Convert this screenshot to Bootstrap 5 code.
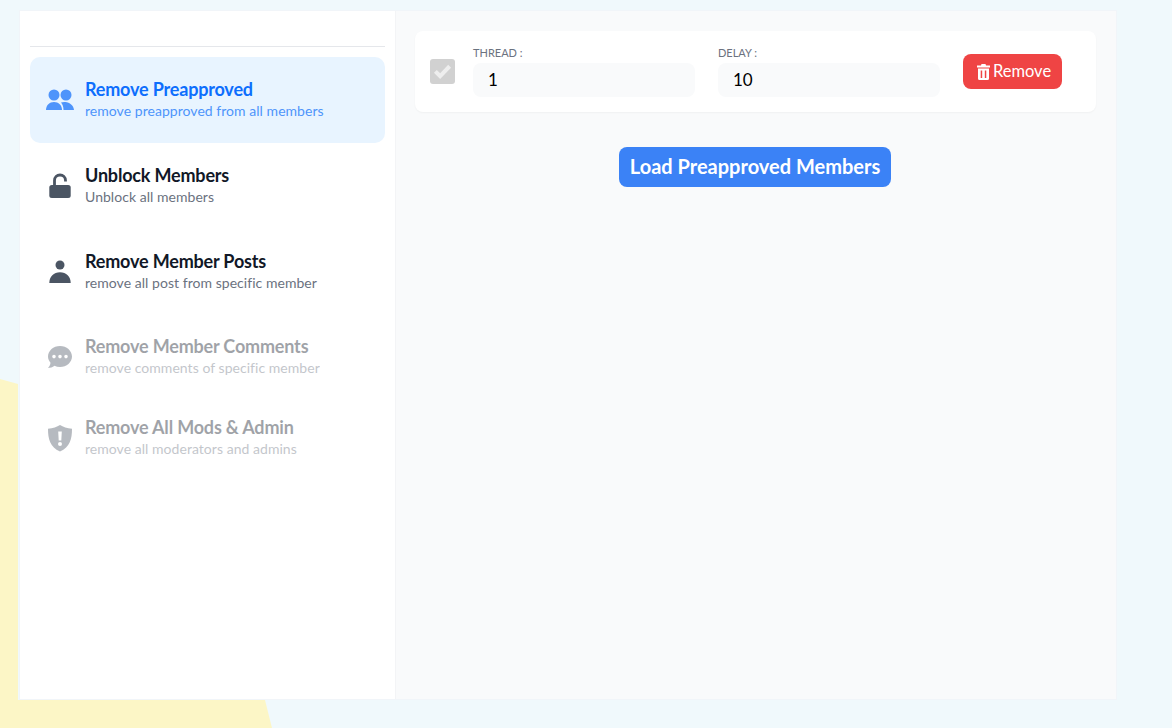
<!DOCTYPE html>
<html lang="en">
<head>
  <meta charset="UTF-8" />
  <meta name="viewport" content="width=device-width, initial-scale=1" />
  <title>Group Tools</title>
  <link href="https://cdn.jsdelivr.net/npm/bootstrap@5.3.3/dist/css/bootstrap.min.css" rel="stylesheet" />
  <style>
    html, body { height: 100%; overflow: hidden; }
    body {
      background: #f0f9fc;
      font-family: Lato, "Open Sans", sans-serif;
      padding: 10px 55px 28px 19px;
    }
    .blob { position: absolute; left: 0; top: 0; width: 1172px; height: 728px; }
    .shell {
      position: relative;
      height: 690px;
      border: 1px solid #f1f5f9;
      background: #f9fafb;
    }
    .side { width: 376px; padding: 35px 10px 0; background: #fff; border-right: 1px solid #f3f4f6; }
    .side-rule { height: 1px; background: #e5e7eb; margin-bottom: 10px; }
    .tool { height: 86px; padding: 20px 15px 0; border-radius: 10px; gap: 10px; color: #111827; }
    .tool svg { width: 30px; height: 30px; flex: none; margin-top: 8px; fill: #4b5563; }
    .tool-name { font-size: 18px; line-height: 24px; font-weight: 700; letter-spacing: -.18px; }
    .tool-desc { font-size: 14px; line-height: 20px; color: #6b7280; letter-spacing: .04px; }
    .tool.on { background: #e8f4ff; }
    .tool.on .tool-name { color: #0d6efd; }
    .tool.on .tool-desc { color: #4e94fb; }
    .tool.on svg { fill: #4e94fb; }
    .tool.off { height: 81px; padding-top: 19px; opacity: .4; }
    .work { padding: 20px 20px 0 19px; }
    .thread-box { height: 81px; padding-left: 15px; background: #fff; border-radius: 8px; box-shadow: 0 1px 2px rgba(0, 0, 0, .04); }
    .tick { width: 25px; height: 25px; margin-right: 18px; background: #d1d1d1; border-radius: 3px; }
    .tick svg { width: 19px; height: 19px; fill: #eee; }
    .field { width: 222px; margin-right: 23px; margin-bottom: 1px; }
    .field label { display: block; font-size: 11px; line-height: 14px; color: #6b7280; margin-bottom: 3px; }
    .field .form-control {
      height: 34px; padding: 0 15px; border: 0; border-radius: 8px; background: #f9fafb;
      font-family: Lato, sans-serif; font-size: 17px; color: #000;
    }
    .btn-drop {
      --bs-btn-bg: #ef4444; --bs-btn-hover-bg: #dc2626; --bs-btn-color: #fff; --bs-btn-hover-color: #fff;
      --bs-btn-border-width: 0;
      width: 99px; height: 35px; padding: 0 0 1px 3px; border-radius: 8px; font-size: 16.500px; gap: 3px;
    }
    .btn-drop svg { width: 13px; height: 16px; flex: none; fill: #fff; margin-top: 1px; }
    .btn-load {
      --bs-btn-bg: #3b82f6; --bs-btn-hover-bg: #2563eb; --bs-btn-color: #fff; --bs-btn-hover-color: #fff;
      --bs-btn-border-width: 0;
      width: 272px; height: 40px; padding: 0 0 2px; margin: 35px 1px 0 0; border-radius: 8px; font-size: 20px; font-weight: 700;
    }
  </style>
</head>
<body>
  <svg class="blob" viewBox="0 0 1172 728"><path d="M0 379 L18 384 L18 700 L265 700 L272 728 L0 728 Z" fill="#fcf6c6"/></svg>

  <div class="shell d-flex">
    <div class="side">
      <div class="side-rule"></div>

      <div class="tool on d-flex">
        <svg viewBox="0 0 30 30"><circle cx="9" cy="10" r="5.5"/><circle cx="21" cy="10" r="5.5"/><path d="M1 25c0-5 3.500-8 8-8s8 3 8 8z"/><path d="M18.500 25c0-3.200-.9-5.700-2.500-7.500 1.300-.4 3-.6 4.300-.4 4.500.3 8.200 3.400 8.700 7.900z"/></svg>
        <div><div class="tool-name">Remove Preapproved</div><div class="tool-desc">remove preapproved from all members</div></div>
      </div>

      <div class="tool d-flex">
        <svg viewBox="0 0 30 30"><path d="M9.500 15V9.500a5.500 5.500 0 0 1 11 0v1" fill="none" stroke="#4b5563" stroke-width="2.800"/><rect x="4.300" y="14" width="21.400" height="13" rx="2.500"/></svg>
        <div><div class="tool-name">Unblock Members</div><div class="tool-desc">Unblock all members</div></div>
      </div>

      <div class="tool d-flex">
        <svg viewBox="0 0 30 30"><circle cx="15" cy="8" r="4.500"/><path d="M4.300 26c0-6.500 4.500-10.700 10.700-10.700S25.700 19.500 25.700 26z"/></svg>
        <div><div class="tool-name">Remove Member Posts</div><div class="tool-desc">remove all post from specific member</div></div>
      </div>

      <div class="tool off d-flex">
        <svg viewBox="0 0 30 30"><path fill-rule="evenodd" d="M15 4c6.600 0 12 4.700 12 10.500S21.600 25 15 25c-2 0-3.900-.4-5.500-1.200C7.500 25.500 5.300 26 3 26c1.500-1.500 2.300-3.500 2.500-5.300C4 19 3 16.900 3 14.500 3 8.700 8.400 4 15 4zM9 12.800a1.800 1.800 0 1 0 0 3.600 1.800 1.800 0 0 0 0-3.600zm6 0a1.800 1.800 0 1 0 0 3.600 1.800 1.800 0 0 0 0-3.600zm6 0a1.800 1.800 0 1 0 0 3.600 1.800 1.800 0 0 0 0-3.600z"/></svg>
        <div><div class="tool-name">Remove Member Comments</div><div class="tool-desc">remove comments of specific member</div></div>
      </div>

      <div class="tool off d-flex">
        <svg viewBox="0 0 30 30"><path fill-rule="evenodd" d="M15 2c3 2 7 3.300 12 3.800 0 10-2 18.500-12 22.700C5 24.300 3 15.800 3 5.800 8 5.300 12 4 15 2zm-1.800 6.500.5 9h2.600l.5-9zM15 19a2 2 0 1 0 0 4 2 2 0 0 0 0-4z"/></svg>
        <div><div class="tool-name">Remove All Mods &amp; Admin</div><div class="tool-desc">remove all moderators and admins</div></div>
      </div>
    </div>

    <div class="work flex-grow-1 d-flex flex-column">
      <div class="thread-box d-flex align-items-center">
        <div class="tick d-flex align-items-center justify-content-center">
          <svg viewBox="0 0 20 20"><path d="M7.500 18 1 11.300l3-3 3.500 3.500L16 3l3 3z"/></svg>
        </div>
        <div class="field">
          <label for="threadNum">THREAD :</label>
          <input id="threadNum" class="form-control" type="text" value="1" />
        </div>
        <div class="field">
          <label for="delayNum">DELAY :</label>
          <input id="delayNum" class="form-control" type="text" value="10" />
        </div>
        <button class="btn btn-drop d-flex align-items-center justify-content-center" type="button">
          <svg viewBox="0 0 13 16"><path fill-rule="evenodd" d="M4.500 0h4L9 1.500h4v2H0v-2h4zM1 4.500h11v10a1.500 1.500 0 0 1-1.500 1.500h-8A1.500 1.500 0 0 1 1 14.500zm2.700 2v7.500h1.500V6.500zm4.100 0v7.500h1.500V6.500z"/></svg>
          Remove
        </button>
      </div>
      <div class="text-center">
        <button class="btn btn-load" type="button">Load Preapproved Members</button>
      </div>
    </div>
  </div>

  <script src="https://cdn.jsdelivr.net/npm/bootstrap@5.3.3/dist/js/bootstrap.bundle.min.js"></script>
</body>
</html>
